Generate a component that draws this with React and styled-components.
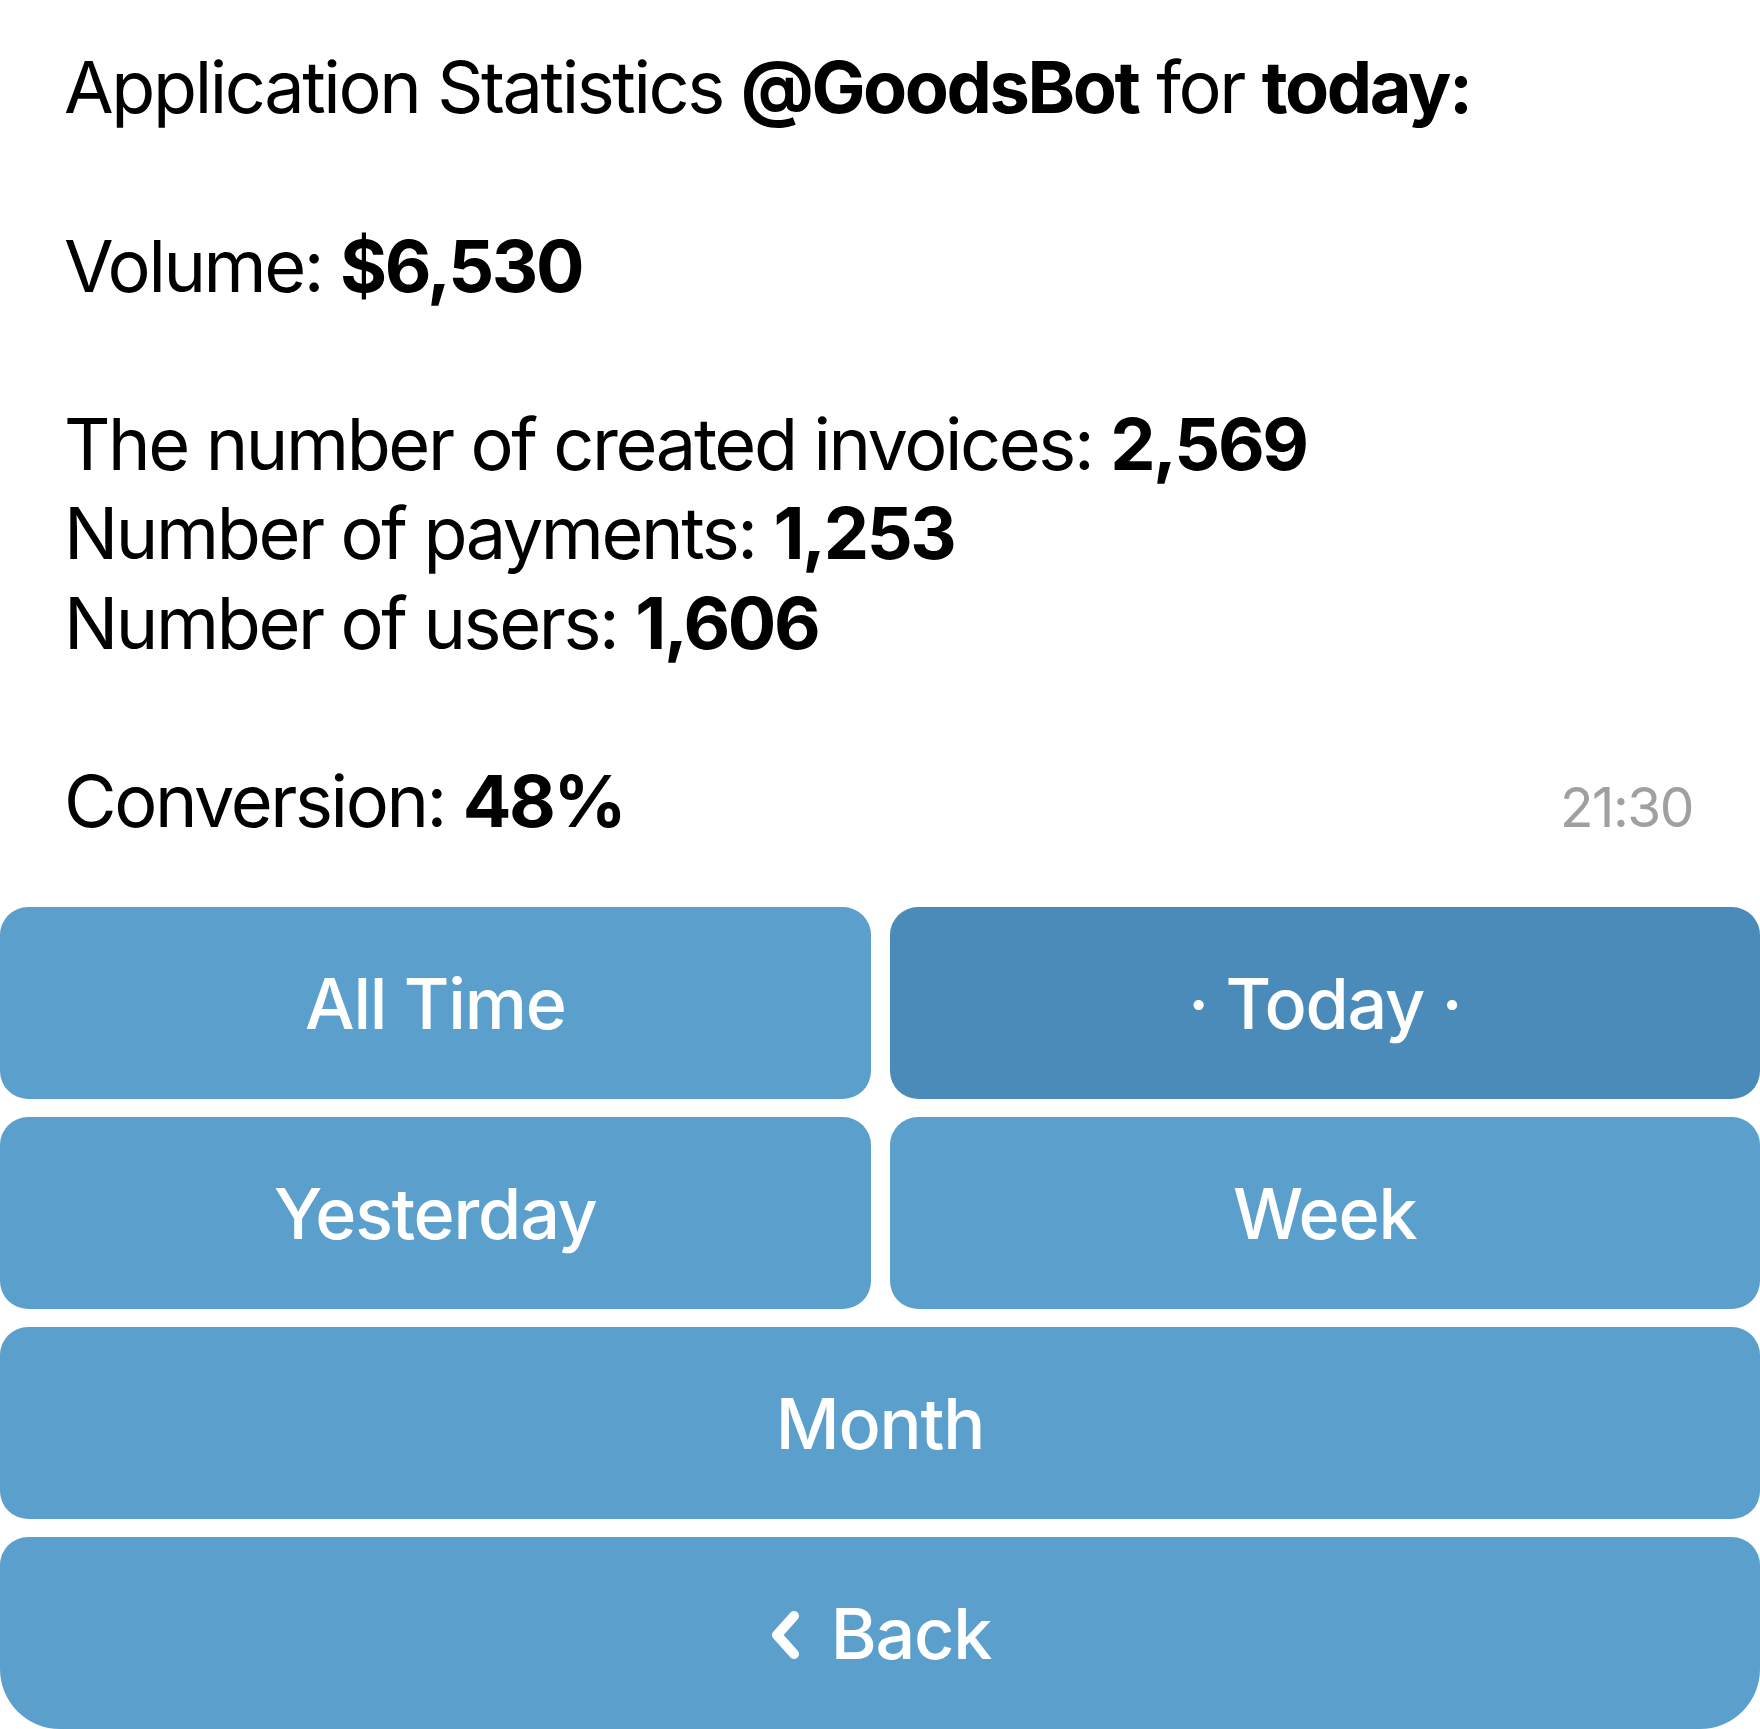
import React from 'react'
import styled, {createGlobalStyle} from 'styled-components'

const GlobalStyle = createGlobalStyle`
  html, body {
    margin: 0;
    padding: 0;
    background: #ffffff;
  }
  body {
    font-family: Inter, "Noto Sans", sans-serif;
  }
`

const rows = [
  {label: 'All Time'},
  {label: '· Today ·', active: true},
  {label: 'Yesterday'},
  {label: 'Week'},
  {label: 'Month', wide: true},
  {label: 'Back', wide: true, back: true},
]

const ChevronLeft = () => (
  <svg width="32" height="48" viewBox="0 0 32 48">
    <path d="M25 5 L8 24 L25 43" fill="none" stroke="#fff" strokeWidth="10" strokeLinecap="round" strokeLinejoin="round" />
  </svg>
)

const App = () => {
  return (
    <Page>
      <GlobalStyle />
      <Message>
        <Line>Application Statistics <b>@GoodsBot</b> for <b>today:</b></Line>
        <Line />
        <Line>Volume: <b>$6,530</b></Line>
        <Line />
        <Line>The number of created invoices: <b>2,569</b></Line>
        <Line>Number of payments: <b>1,253</b></Line>
        <Line>Number of users: <b>1,606</b></Line>
        <Line />
        <LastLine>
          <span>Conversion: <b>48%</b></span>
          <Time>21:30</Time>
        </LastLine>
      </Message>
      <Keyboard>
        {rows.map(r => (
          <KeyButton key={r.label} $active={r.active} $wide={r.wide} $back={r.back}>
            {r.back && <ChevronLeft />}
            <span>{r.label}</span>
          </KeyButton>
        ))}
      </Keyboard>
    </Page>
  )
}

export default App

const Page = styled.div`
  width: 1760px;
  height: 1729px;
  overflow: hidden;
  display: flex;
  flex-direction: column;
`

const Message = styled.div`
  padding: 42px 67px 0 64px;
  height: 865px;
  box-sizing: border-box;
  font-size: 72px;
  line-height: 89.25px;
  color: #000;
  letter-spacing: -2.4px;

  b {
    font-weight: 700;
  }
`

const Line = styled.div`
  min-height: 89.25px;
  white-space: nowrap;
`

const LastLine = styled.div`
  display: flex;
  justify-content: space-between;
  align-items: baseline;
`

const Time = styled.span`
  font-size: 55px;
  color: #a0a0a0;
  letter-spacing: -1.5px;
`

const Keyboard = styled.div`
  display: grid;
  grid-template-columns: 1fr 1fr;
  grid-auto-rows: 192px;
  column-gap: 19px;
  row-gap: 18px;
  margin-top: 42px;
`

const KeyButton = styled.div`
  grid-column: ${p => (p.$wide ? '1 / span 2' : 'auto')};
  background: ${p => (p.$active ? '#4a8bba' : '#5b9fcd')};
  border-radius: ${p => (p.$back ? '28px 28px 60px 60px' : '28px')};
  color: #fff;
  font-size: 70px;
  font-weight: 500;
  letter-spacing: -1.2px;
  display: flex;
  align-items: center;
  justify-content: center;
  gap: 30px;

  svg {
    margin-top: 4px;
  }
`
